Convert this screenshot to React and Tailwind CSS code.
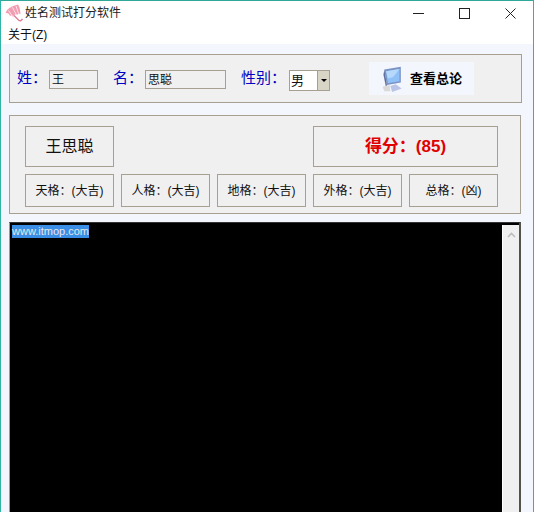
import React from 'react';

const cjk = 'font-["Liberation_Sans","Noto_Sans_CJK_SC",sans-serif]';

function UmbrellaIcon() {
  return (
    <svg width="18" height="18" viewBox="0 0 18 18" className="shrink-0">
      <path d="M0.5 9 Q2 3 13 0.5 Q15 3 15.5 10 Q13.5 8.5 12 11 Q10 9 8 13 Q7.5 10 5 12 Q4 8.5 0.5 9 Z" fill="#f29db2" />
      <path d="M3.5 6.5 L8 13 M7.5 3.5 L11.5 11 M11 2 L13.5 9.5" stroke="#fde3e9" strokeWidth="1" fill="none" />
      <path d="M9 11.5 L13.5 16 Q15.5 18 17.5 15" stroke="#df7f97" strokeWidth="1.4" fill="none" />
    </svg>
  );
}

function MonitorIcon() {
  return (
    <svg width="22" height="26" viewBox="0 0 24 30" className="shrink-0">
      <path d="M2 4 L21 1 L21 19 L5 22 Z" fill="#7b93c4" />
      <path d="M4 6 L19.5 3.5 L19.5 17.5 L6 20 Z" fill="#8fc0f7" />
      <path d="M4 6 L19.5 3.5 L12 13 L6 14 Z" fill="#b5d8fb" />
      <path d="M2 4 L5 22 L4 25 L1 10 Z" fill="#5d6f9c" />
      <path d="M9 23 L15 21 L22 26 L11 30 Z" fill="#b9c4e6" />
      <path d="M0 24 L8 22 L9 29 L2 29 Z" fill="#d9d9d9" />
    </svg>
  );
}

function ResultBox({ text }) {
  return (
    <div className="flex h-[33px] w-[89px] items-center justify-center border border-[#a69f92] text-[12px] text-[#111]">
      {text}
    </div>
  );
}

export default function App() {
  return (
    <div className={`h-[532px] w-[534px] overflow-hidden bg-white ${cjk}`}>
      <div className="flex h-[512px] flex-col border-x border-t border-x-[#2fb5a5] border-t-[#2fa898] bg-[#f3f6fc]">
        <div className="flex h-[24px] shrink-0 items-center bg-white pl-[4px]">
          <UmbrellaIcon />
          <span className="ml-[2px] text-[12px] text-[#222]">姓名测试打分软件</span>
          <div className="ml-auto mr-[17px] flex items-center gap-[35px]">
            <svg width="11" height="11" viewBox="0 0 11 11">
              <path d="M0 5.5 H11" stroke="#222" strokeWidth="1" />
            </svg>
            <svg width="11" height="11" viewBox="0 0 11 11">
              <rect x="0.5" y="0.5" width="10" height="10" fill="none" stroke="#222" strokeWidth="1" />
            </svg>
            <svg width="11" height="11" viewBox="0 0 11 11">
              <path d="M0.5 0.5 L10.5 10.5 M10.5 0.5 L0.5 10.5" stroke="#222" strokeWidth="1" />
            </svg>
          </div>
        </div>
        <div className="flex h-[19px] shrink-0 items-center bg-white pl-[7px] pt-[1px] text-[12px] text-[#111]">关于(Z)</div>

        <div className="ml-[8px] mt-[10px] flex h-[49px] w-[513px] shrink-0 items-center border border-[#a69f92] bg-[#f0f0f0] pl-[7px] text-[#0000c0]">
          <span className="w-[32px] text-[15px]">姓：</span>
          <div className="mt-[2px] flex h-[19px] w-[49px] items-center border border-[#a69f92] bg-[#f0f0f0] pl-[2px] text-[12px] text-[#111]">王</div>
          <span className="ml-[15px] w-[32px] text-[15px]">名：</span>
          <div className="mt-[2px] flex h-[19px] w-[81px] items-center border border-[#a69f92] bg-[#f0f0f0] pl-[2px] text-[12px] text-[#111]">思聪</div>
          <span className="ml-[15px] w-[48px] text-[15px]">性别：</span>
          <div className="mt-[4px] flex h-[21px] w-[41px] border border-[#a69f92] bg-white">
            <span className="flex flex-1 items-center pl-[1px] text-[13px] text-[#111]">男</span>
            <div className="flex w-[12px] items-center justify-center border-l border-[#a69f92] bg-[#d8d5c6]">
              <div className="h-0 w-0 border-x-[3px] border-t-[3px] border-x-transparent border-t-black" />
            </div>
          </div>
          <button className="ml-[39px] flex h-[33px] w-[105px] items-center gap-[6px] bg-[#f3f6fc] pl-[13px] text-[13px] font-bold text-black">
            <MonitorIcon />
            查看总论
          </button>
        </div>

        <div className="ml-[8px] mt-[12px] flex h-[99px] w-[512px] shrink-0 flex-col gap-[7px] border border-[#a69f92] bg-[#f0f0f0] pl-[15px] pt-[10px]">
          <div className="flex items-center justify-between pr-[22px]">
            <div className="flex h-[41px] w-[89px] items-center justify-center border border-[#a69f92] text-[16px] text-[#111]">王思聪</div>
            <div className="flex h-[41px] w-[185px] items-center justify-center border border-[#a69f92] text-[17px] font-bold text-[#e00000]">得分：(85)</div>
          </div>
          <div className="flex gap-[7px]">
            <ResultBox text="天格：(大吉)" />
            <ResultBox text="人格：(大吉)" />
            <ResultBox text="地格：(大吉)" />
            <ResultBox text="外格：(大吉)" />
            <ResultBox text="总格：(凶)" />
          </div>
        </div>

        <div className="ml-[8px] mt-[8px] flex w-[512px] flex-1 border-l border-r-2 border-t border-l-[#999] border-r-[#55524c] border-t-[#333] bg-black">
          <div className="flex-1 pl-[2px] pt-[2px]">
            <span className="block h-[13px] w-fit bg-[#3a8ee6] text-[11px] leading-[13px] text-[#e8e8e8]">www.itmop.com</span>
          </div>
          <div className="mt-[2px] flex w-[17px] justify-center border-l border-white bg-[#f0f0f0] pt-[7px]">
            <svg width="9" height="6" viewBox="0 0 9 6">
              <path d="M1 5 L4.5 1.5 L8 5" stroke="#bdbdbd" strokeWidth="1.6" fill="none" />
            </svg>
          </div>
        </div>
      </div>
    </div>
  );
}
